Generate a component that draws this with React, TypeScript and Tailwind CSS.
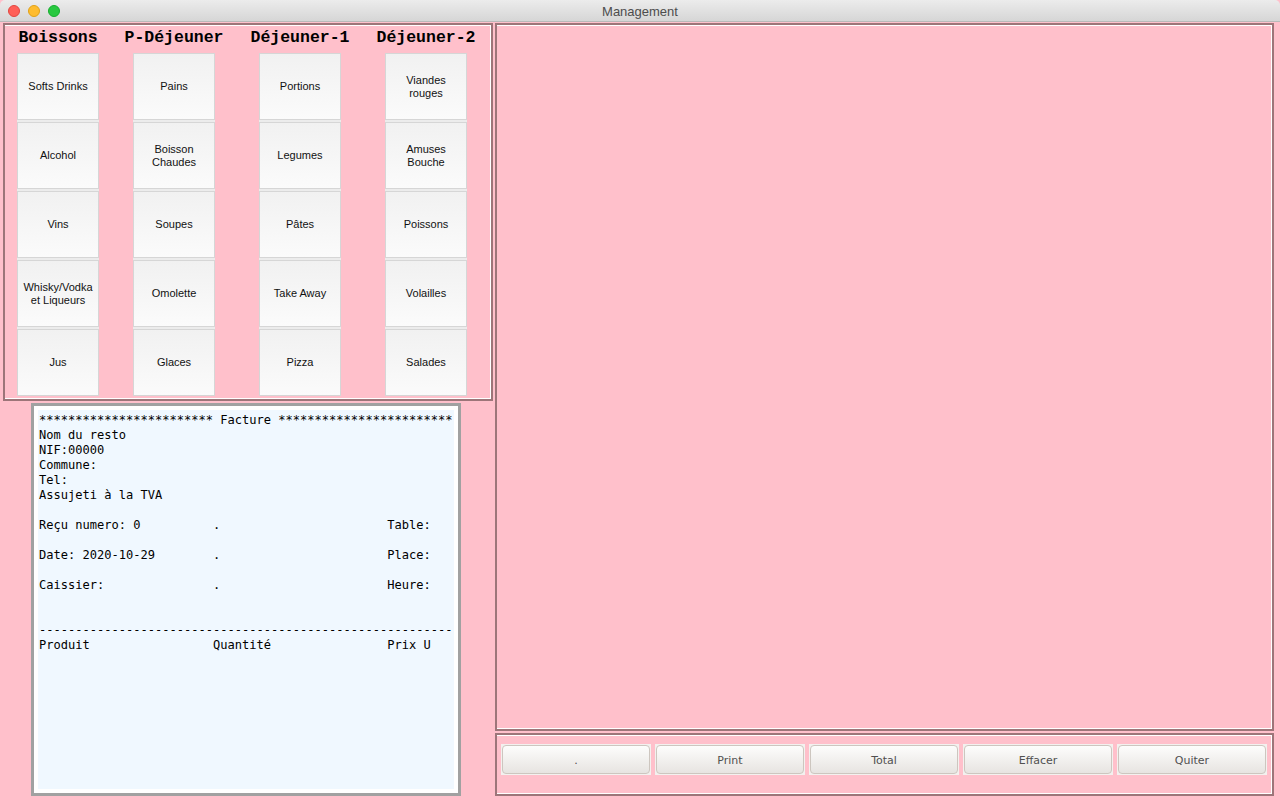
import React from 'react';

const columns = [
  { title: 'Boissons', items: ['Softs Drinks', 'Alcohol', 'Vins', 'Whisky/Vodka\net Liqueurs', 'Jus'] },
  { title: 'P-Déjeuner', items: ['Pains', 'Boisson\nChaudes', 'Soupes', 'Omolette', 'Glaces'] },
  { title: 'Déjeuner-1', items: ['Portions', 'Legumes', 'Pâtes', 'Take Away', 'Pizza'] },
  { title: 'Déjeuner-2', items: ['Viandes\nrouges', 'Amuses\nBouche', 'Poissons', 'Volailles', 'Salades'] },
];

const colMargins = ['ml-[3px]', 'ml-[16px]', 'ml-[26px]', 'ml-[26px]'];

const facture = [
  '************************ Facture ************************',
  'Nom du resto',
  'NIF:00000',
  'Commune:',
  'Tel:',
  'Assujeti à la TVA',
  '',
  'Reçu numero: 0          .                       Table:',
  '',
  'Date: 2020-10-29        .                       Place:',
  '',
  'Caissier:               .                       Heure:',
  '',
  '',
  '---------------------------------------------------------',
  'Produit                 Quantité                Prix U',
];

const actions = ['.', 'Print', 'Total', 'Effacer', 'Quiter'];

// bordure "etched" façon Swing
const etched = 'border-2 border-[#9d7579] shadow-[inset_-1px_-1px_0_#ffffff,inset_0_1px_0_#ffffff]';

function MenuButton({ label }: { label: string }) {
  return (
    <div className="w-[82px] h-[67px] border border-[#d6d6d6] bg-gradient-to-b from-[#f1f1f1] to-[#fbfbfb] flex items-center justify-center text-center whitespace-pre-line text-[11px] leading-[13px] text-[#111] font-['Liberation_Sans',Arial,sans-serif]">
      {label}
    </div>
  );
}

export default function App() {
  return (
    <div className="w-[1280px] h-[800px] bg-[#ffc0cb] flex flex-col overflow-hidden">
      {/* barre de titre */}
      <div className="h-[22px] relative flex items-center justify-center bg-gradient-to-b from-[#ececec] to-[#d6d6d6] border-b border-[#b9b9b9] rounded-t-[5px]">
        <div className="absolute left-[8px] top-[5px] flex gap-[8px]">
          <span className="w-[12px] h-[12px] rounded-full bg-[#ff5f57] border border-[#e2463f]" />
          <span className="w-[12px] h-[12px] rounded-full bg-[#febc2e] border border-[#e1a116]" />
          <span className="w-[12px] h-[12px] rounded-full bg-[#28c840] border border-[#14ae2d]" />
        </div>
        <span className="pt-[2px] text-[13px] text-[#4d4d4d] font-['Liberation_Sans',Arial,sans-serif]">Management</span>
      </div>

      <div className="flex-1 flex gap-[2px] pt-[1px] pl-[3px] pr-[6px] pb-[4px] min-h-0">
        {/* colonne gauche */}
        <div className="w-[490px] flex flex-col">
          <div className={`h-[378px] ${etched} flex pt-[3px]`}>
            {columns.map((col, i) => (
              <div key={col.title} className={`w-[100px] flex flex-col items-center ${colMargins[i]}`}>
                <div className="h-[20px] leading-[20px] text-[16.5px] font-bold text-black font-['Liberation_Mono','Courier_New',monospace]">
                  {col.title}
                </div>
                <div className="mt-[5px] flex flex-col gap-[2px] bg-[#ececec]">
                  {col.items.map((it) => (
                    <MenuButton key={it} label={it} />
                  ))}
                </div>
              </div>
            ))}
          </div>

          <div className="mt-[2px] ml-[28px] w-[430px] flex-1 border-[3px] border-[#a1a1a1] bg-white p-[4px]">
            <div className="h-full bg-[#f0f8ff] pl-[1px] pt-[3px] whitespace-pre text-[12.05px] leading-[15px] text-black font-['DejaVu_Sans_Mono',monospace]">
              {facture.map((line, i) => (
                <div key={i} className="h-[15px]">{line}</div>
              ))}
            </div>
          </div>
        </div>

        {/* colonne droite */}
        <div className="flex-1 flex flex-col gap-[2px]">
          <div className={`flex-1 ${etched}`} />
          <div className={`h-[63px] ${etched} flex gap-[4px] pt-[9px] pl-[4px]`}>
            {actions.map((a) => (
              <div key={a} className="w-[150px] h-[31px] bg-[#f3f1ef] p-[1px]">
                <div className="h-full pt-[3px] rounded-[4px] border border-[#cdc6bf] bg-gradient-to-b from-[#fdfdfc] to-[#e7e4e1] flex items-center justify-center text-[11px] text-[#505050] font-['DejaVu_Sans',sans-serif]">
                  {a}
                </div>
              </div>
            ))}
          </div>
        </div>
      </div>
    </div>
  );
}
